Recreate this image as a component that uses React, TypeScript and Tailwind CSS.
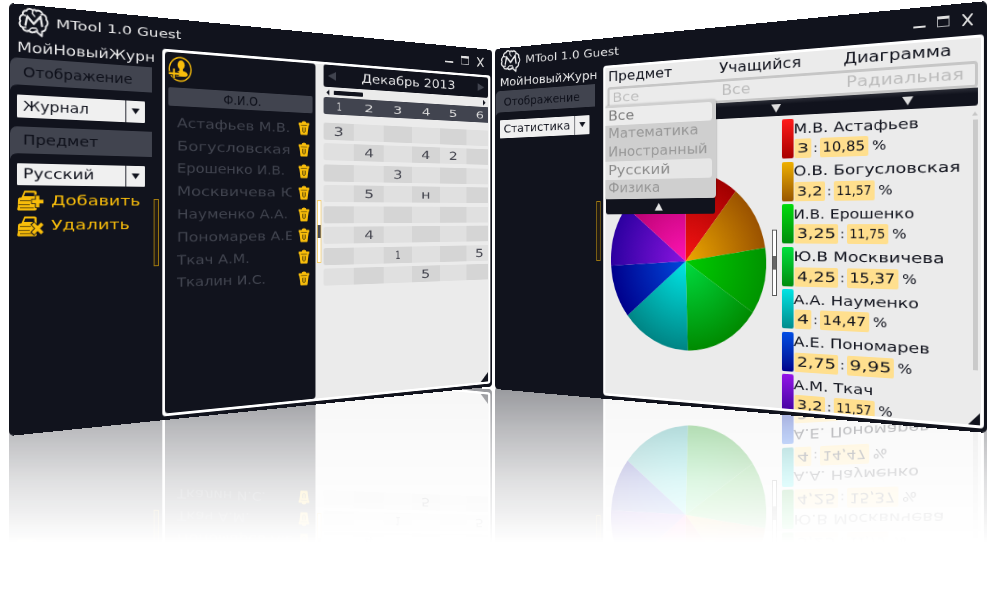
import React, { useLayoutEffect, useRef, useState } from "react";

type FitProps = { w: number; className?: string; children: string };

/** One line of text stretched horizontally to an exact width. */
function Fit({ w, className = "", children }: FitProps) {
  const ref = useRef<HTMLSpanElement>(null);
  const [k, setK] = useState(1);
  useLayoutEffect(() => {
    if (ref.current) setK(w / ref.current.offsetWidth);
  }, [w, children]);
  return (
    <div className={"shrink-0 whitespace-nowrap " + className} style={{ width: w }}>
      <span ref={ref} className="inline-block origin-left" style={{ transform: `scaleX(${k})` }}>
        {children}
      </span>
    </div>
  );
}

function Logo() {
  return (
    <svg viewBox="0 0 32 30" className="h-[30px] w-[32px] shrink-0" fill="none" stroke="#e9e9ea" strokeWidth="1.9" strokeLinecap="round" strokeLinejoin="round">
      <path d="M15 3.2C13 1 9.5 1.6 8.6 4 5.6 3.8 4.4 6.4 5 8.4 2 9.4 1 12.4 2.4 14.8 .8 17.2 1.8 20.4 4.6 21.2 5.4 24.2 8.6 25 11 24 13 26 16.6 25.8 18.4 24L24.4 28.4 24.6 23.6C27.4 23.4 29.2 21 28.4 18.6 31 16.8 31 13.2 29 11.6 29.6 8.6 27.6 6.4 25.2 6.4 24.2 3.2 20.8 2 18.4 3.4 17.4 2 16 2.2 15 3.2Z" />
      <path d="M7.6 18.5 9.4 9.4 16 16.8 23 8.8 24.6 18.2" strokeWidth="2.2" />
      <path d="M5 8.4 7.4 9M4.6 21.2 8 21M11 24 13 21.6M14 21 18.6 21 20 23.4M15 3.2 14.6 6.4 17 9M25.2 6.4 23.4 7" strokeWidth="1.4" />
    </svg>
  );
}

function Book({ kind }: { kind: "add" | "del" }) {
  return (
    <svg viewBox="0 0 28 21" className="h-[21px] w-[28px] shrink-0">
      <path d="M7.5 .5H18Q20 .5 20 2.5V8H4.2Z" fill="#f8bd0b" />
      <path d="M8.4 2.6H17.6V6H7Z" fill="#11131d" />
      <path d="M2.6 7.4H20V19Q20 20.4 18.6 20.4H1.4Q0 20.4 .3 18.8L.8 16.4 1 10Q1 7.4 2.6 7.4Z" fill="#f8bd0b" />
      <path d="M3 10.6H14M1.6 14.6H13M3 17.8H17" stroke="#5a450a" strokeWidth=".9" />
      {kind === "add" ? (
        <>
          <path d="M21 4.6V18M14.5 11.4H28" stroke="#11131d" strokeWidth="5.4" />
          <path d="M21 5.6V17.2M15.2 11.4H27" stroke="#f8bd0b" strokeWidth="3.6" />
        </>
      ) : (
        <>
          <path d="M15.4 7 26.6 18.2M26.6 7 15.4 18.2" stroke="#11131d" strokeWidth="5.2" />
          <path d="M16.2 7.8 25.8 17.4M25.8 7.8 16.2 17.4" stroke="#f8bd0b" strokeWidth="3.6" />
        </>
      )}
    </svg>
  );
}

function AddPerson() {
  return (
    <svg viewBox="0 0 28 28" className="h-[28px] w-[28px]">
      <circle cx="14" cy="14" r="12.8" fill="none" stroke="#f8bd0b" strokeWidth="1.6" />
      <ellipse cx="15" cy="9.2" rx="4.2" ry="5" fill="#f8bd0b" />
      <path d="M13 13H17V15.4Q22.8 16.4 22.8 19.4 22.8 21.8 18 21.8H8V18L13 15.4Z" fill="#f8bd0b" />
      <path d="M6.6 13.4V24.4M1 18.9H12.2" stroke="#11131d" strokeWidth="4.2" />
      <path d="M6.6 13.4V24M.6 18.8H12.4" stroke="#f8bd0b" strokeWidth="2.2" />
    </svg>
  );
}

function Trash() {
  return (
    <svg viewBox="0 0 15 17" className="h-[17px] w-[15px] shrink-0">
      <path d="M5 1.2Q7.5 0 10 1.2L10.2 2.4H14.5V5.2H13.8L12.4 15.4Q12.2 16.6 11 16.6H4Q2.8 16.6 2.6 15.4L1.2 5.2H.5V2.4H4.8Z" fill="#f8bd0b" />
      <path d="M3.4 5.4H11.6M5.6 7.8V12Q5.6 13.6 7.5 13.6 9.4 13.6 9.4 12V7.8M7.5 7.4V13.6" stroke="#6b5208" strokeWidth=".9" fill="none" />
    </svg>
  );
}

function Tri({ dir, className }: { dir: "up" | "down" | "left" | "right"; className: string }) {
  const d = { up: "M0 10H10L5 0Z", down: "M0 0H10L5 10Z", left: "M10 0V10L0 5Z", right: "M0 0V10L10 5Z" }[dir];
  return (
    <svg viewBox="0 0 10 10" preserveAspectRatio="none" className={"shrink-0 " + className}>
      <path d={d} fill="currentColor" />
    </svg>
  );
}

function Tab({ label, w }: { label: string; w: number }) {
  return (
    <div className="h-[33px]">
      <div className="flex h-[27px] w-[152px] items-center rounded-tl-[7px] bg-[#41444f] pl-[13px] text-[#0d0f19]">
        <Fit w={w}>{label}</Fit>
      </div>
      <svg viewBox="0 0 8 6" className="block h-[6px] w-[8px]">
        <path d="M0 0H8Q1 0 0 6Z" fill="#41444f" />
      </svg>
    </div>
  );
}

function Select({ label, w }: { label: string; w: number }) {
  return (
    <div className="ml-[7px] flex h-[22.5px] w-[137px] items-stretch rounded-[1px] bg-[#f0f0f0] text-[#11131d]">
      <div className="flex flex-1 items-center border-r border-[#11131d] pb-px pl-[6px]">
        <Fit w={w}>{label}</Fit>
      </div>
      <div className="flex w-[21px] items-center justify-center">
        <Tri dir="down" className="h-[6px] w-[9px]" />
      </div>
    </div>
  );
}

function Scroller({ light }: { light?: boolean }) {
  return light ? (
    <div className="flex h-[73px] w-[6px] items-center border border-[#555] bg-white">
      <div className="h-[15px] w-full bg-[#666]" />
    </div>
  ) : (
    <div className="h-[72px] w-[6px] border border-[#a87f0e] bg-[#221c14]" />
  );
}

type ChromeProps = { className: string; side: React.ReactNode; children: React.ReactNode };

function Chrome({ className, side, children }: ChromeProps) {
  return (
    <div className={"absolute left-0 top-0 flex origin-[0_0] flex-col overflow-hidden rounded-[5px] bg-[#11131d] font-['DejaVu_Sans',sans-serif] text-[14px] leading-none text-[#e9e9ea] " + className}>
      <div className="flex h-[33px] shrink-0 items-center pl-[9px] pr-[13px]">
        <Logo />
        <Fit w={140} className="ml-[7px] text-[13px]">MTool 1.0 Guest</Fit>
        <div className="ml-auto flex items-center gap-[12px]">
          <div className="mt-[7px] h-[2px] w-[13px] bg-[#e0e0e0]" />
          <div className="h-[11px] w-[13px] border border-t-[3px] border-[#a9aaae] border-t-[#e0e0e0]" />
          <svg viewBox="0 0 12 12" className="h-[12px] w-[13px]">
            <path d="M1 0 11 12M11 0 1 12" stroke="#e4e4e4" strokeWidth="1.9" />
          </svg>
        </div>
      </div>
      <div className="flex min-h-0 flex-1 pb-[4px] pr-[3px]">
        <div className="flex w-[164.5px] shrink-0">
          <div className="flex w-[155px] shrink-0 flex-col pl-px">
            <div className="flex h-[21px] items-center overflow-hidden pb-px pl-[7px]">
              <Fit w={149}>МойНовыйЖурн</Fit>
            </div>
            {side}
          </div>
          <div className="pt-[162px]">
            <Scroller />
          </div>
        </div>
        <div className="relative flex min-w-0 flex-1 overflow-hidden rounded-[4px] border-[3px] border-white bg-[#ebebeb] text-[#11131d]">
          {children}
        </div>
      </div>
    </div>
  );
}

const students: [string, number][] = [
  ["Астафьев М.В.", 141],
  ["Богусловская", 141],
  ["Ерошенко И.В.", 134],
  ["Москвичева Ю", 149],
  ["Науменко А.А.", 138],
  ["Пономарев А.Е", 146],
  ["Ткач А.М.", 89],
  ["Ткалин И.С.", 109],
];

const marks = ["3     ", " 4 42 ", "  3   ", " 5 н  ", "      ", " 4    ", "  1  5", "   5  "];

function Journal() {
  return (
    <Chrome
      className="h-[433px] w-[622px] [transform:matrix3d(1.004155,0.0987,0,0.0004617,0,1,0,0,0,0,1,0,9,3,0,1)]"
      side={
        <>
          <Tab label="Отображение" w={117} />
          <div className="mt-[4px]">
            <Select label="Журнал" w={69} />
          </div>
          <div className="mt-[9px]">
            <Tab label="Предмет" w={79} />
          </div>
          <div className="mt-[4px]">
            <Select label="Русский" w={75} />
          </div>
          <div className="mt-[2.5px] flex h-[26px] items-center pl-[7px] text-[#f8bd0b]">
            <Book kind="add" />
            <Fit w={97} className="ml-[7px] text-[13.5px]">Добавить</Fit>
          </div>
          <div className="flex h-[26px] items-center pl-[7px] text-[#f8bd0b]">
            <Book kind="del" />
            <Fit w={85} className="mb-[2px] ml-[7px] text-[13.5px]">Удалить</Fit>
          </div>
        </>
      }
    >
      <div className="flex w-[189px] shrink-0 flex-col rounded-[4px] bg-[#11131d] px-[4px] pt-[4px]">
        <AddPerson />
        <div className="mt-[6px] flex h-[20px] items-center justify-center rounded-[2px] bg-[#41444f] text-[#0d0f19]">
          <Fit w={48}>Ф.И.О.</Fit>
        </div>
        <div className="mt-[5.5px] flex flex-col text-[#41444f]">
          {students.map(([name, w]) => (
            <div key={name} className="flex h-[24.8px] items-center">
              <div className="ml-[10px] w-[143px] overflow-hidden py-[3px]">
                <Fit w={w} className="text-[14px]">{name}</Fit>
              </div>
              <div className="ml-[9px]">
                <Trash />
              </div>
            </div>
          ))}
        </div>
      </div>
      <div className="w-[9px] shrink-0 pl-[2.5px] pt-[159px]">
        <div className="flex h-[73px] w-[6px] items-center border border-[#f3c552] bg-white">
          <div className="h-[15px] w-full bg-[#4a4a50]" />
        </div>
      </div>
      <div className="flex w-[249.5px] shrink-0 flex-col pl-[2.5px]">
        <div className="flex h-[26px] items-center justify-between rounded-[3px] bg-[#11131d] px-[6px] text-[#e9e9ea]">
          <Tri dir="left" className="h-[10px] w-[11px] text-[#41444f]" />
          <Fit w={141} className="text-[14.5px]">Декабрь 2013</Fit>
          <Tri dir="right" className="h-[10px] w-[11px] text-[#41444f]" />
        </div>
        <div className="flex h-[12px] items-center px-[4px]">
          <Tri dir="left" className="h-[7px] w-[4px]" />
          <div className="ml-[6px] h-[5px] w-[41px] rounded-[1px] bg-[#11131d]" />
          <Tri dir="right" className="ml-auto h-[7px] w-[4px]" />
        </div>
        <div className="flex h-[20px] items-center overflow-hidden rounded-l-[3px] bg-[#41444f] text-[#dcdcdc]">
          {["1", "2", "3", "4", "5", "6"].map((d) => (
            <div key={d} className="flex w-[42.4px] shrink-0 justify-center">
              <Fit w={d === "1" ? 7 : 13} className="text-[13px]">{d}</Fit>
            </div>
          ))}
        </div>
        <div className="mt-[9.5px] flex flex-col gap-[4.5px]">
          {marks.map((row, r) => (
            <div key={r} className="flex h-[20px] overflow-hidden rounded-l-[3px]">
              {row.split("").map((m, c) => (
                <div key={c} className={"flex w-[42.4px] shrink-0 items-center justify-center text-[#41424c] " + ((r + c) % 2 ? "bg-[#e0e0e0]" : "bg-[#d5d5d5]")}>
                  {m !== " " && <Fit w={m === "1" ? 8 : 14} className="text-[14px]">{m}</Fit>}
                </div>
              ))}
            </div>
          ))}
        </div>
      </div>
      <svg viewBox="0 0 12 12" className="absolute bottom-0 right-px h-[12px] w-[12px]">
        <path d="M12 0V12H0Z" fill="#11131d" />
      </svg>
    </Chrome>
  );
}

const slices: [number, string, string][] = [
  [10.85, "#f81414", "#a00000"],
  [11.57, "#eda800", "#9a5200"],
  [11.75, "#00cc00", "#009400"],
  [15.37, "#00dc40", "#008a00"],
  [14.47, "#00e6e6", "#008484"],
  [9.95, "#0048dc", "#00008c"],
  [11.57, "#8a14e0", "#2c00a0"],
  [14.47, "#ff14b4", "#b00068"],
];

function Pie() {
  let acc = 0;
  const pt = (p: number) => {
    const a = (p / 100) * Math.PI * 2;
    return `${(102.5 + 102.5 * Math.sin(a)).toFixed(2)} ${(102.5 - 102.5 * Math.cos(a)).toFixed(2)}`;
  };
  return (
    <svg viewBox="0 0 205 205" className="h-[205px] w-[205px] shrink-0">
      <defs>
        {slices.map(([, a, b], i) => (
          <radialGradient key={i} id={`slice${i}`} gradientUnits="userSpaceOnUse" cx="102.5" cy="102.5" r="102.5">
            <stop offset="0" stopColor={a} />
            <stop offset="1" stopColor={b} />
          </radialGradient>
        ))}
      </defs>
      {slices.map(([p], i) => {
        const from = acc;
        acc += p;
        return <path key={i} d={`M102.5 102.5L${pt(from)}A102.5 102.5 0 0 1 ${pt(acc)}Z`} fill={`url(#slice${i})`} />;
      })}
    </svg>
  );
}

type Legend = { name: string; w: number; mark: string; mw: number; pct: string; pw: number; bar: string };

const legend: Legend[] = [
  { name: "М.В. Астафьев", w: 141, mark: "3", mw: 20, pct: "10,85", pw: 55, bar: "from-[#ff1a1a] to-[#a80000]" },
  { name: "О.В. Богусловская", w: 184, mark: "3,2", mw: 36, pct: "11,57", pw: 46, bar: "from-[#eeb000] to-[#985600]" },
  { name: "И.В. Ерошенко", w: 136, mark: "3,25", mw: 51, pct: "11,75", pw: 46, bar: "from-[#00dc0c] to-[#008c0c]" },
  { name: "Ю.В Москвичева", w: 168, mark: "4,25", mw: 51, pct: "15,37", pw: 57, bar: "from-[#00e03c] to-[#008c0c]" },
  { name: "А.А. Науменко", w: 141, mark: "4", mw: 20, pct: "14,47", pw: 56, bar: "from-[#00e4e4] to-[#008c8c]" },
  { name: "А.Е. Пономарев", w: 153, mark: "2,75", mw: 51, pct: "9,95", pw: 52, bar: "from-[#004ce4] to-[#00008c]" },
  { name: "А.М. Ткач", w: 91, mark: "3,2", mw: 36, pct: "11,57", pw: 46, bar: "from-[#9414e8] to-[#40009c]" },
];

const subjects: [string, number, string][] = [
  ["Все", 37, "bg-[#ececec] text-[#7c7c7c]"],
  ["Математика", 123, "text-[#979797]"],
  ["Иностранный", 135, "text-[#979797]"],
  ["Русский", 86, "bg-[#e6e6e6] text-[#8c8c8c]"],
  ["Физика", 73, "text-[#979797]"],
];

function Stats() {
  return (
    <Chrome
      className="h-[432px] w-[625px] [transform:matrix3d(0.5728,-0.098,0,-0.0004329,0,1,0,0,0,0,1,0,628.95,62.26,0,1.2706)]"
      side={
        <>
          <Tab label="Отображение" w={117} />
          <div className="mt-[4px]">
            <Select label="Статистика" w={103} />
          </div>
        </>
      }
    >
      <div className="flex min-w-0 flex-1 flex-col">
        <div className="flex h-[23px] shrink-0 items-center pb-px pl-[4px] text-[15px]">
          <Fit w={89}>Предмет</Fit>
          <Fit w={101} className="ml-[61px]">Учащийся</Fit>
          <Fit w={117} className="ml-[49px]">Диаграмма</Fit>
        </div>
        <div className="ml-[3px] mr-[3px] flex h-[27px] shrink-0 items-center rounded-[4px] border-[3px] border-[#c6c6c6] bg-[#ebebeb] text-[15px] text-[#bdbdbd]">
          <Fit w={38} className="ml-[4px]">Все</Fit>
          <Fit w={37} className="ml-[109px]">Все</Fit>
          <Fit w={127} className="ml-[113px]">Радиальная</Fit>
        </div>
        <div className="ml-[3px] mr-[3px] flex h-[18px] shrink-0 items-center rounded-b-[3px] bg-[#11131d] bg-linear-to-b from-[#2b2d36] to-[#11131d] to-30% text-[#dedede]">
          <Tri dir="down" className="ml-[216px] h-[9px] w-[12px]" />
          <Tri dir="down" className="ml-[138px] h-[9px] w-[12px]" />
        </div>
        <div className="flex min-h-0 flex-1">
          <div className="shrink-0 pl-[8px] pt-[59px]">
            <Pie />
          </div>
          <div className="ml-[7px] shrink-0 pt-[125px]">
            <Scroller light />
          </div>
          <div className="ml-[6px] flex h-[321px] w-[202px] shrink-0 flex-col gap-[3.5px] overflow-hidden pt-[4px]">
            {legend.map((l) => (
              <div key={l.name} className="flex h-[43px] shrink-0">
                <div className={"w-[14px] shrink-0 rounded-[2px] bg-linear-to-b " + l.bar} />
                <div className="flex flex-col">
                  <Fit w={l.w} className="flex h-[22px] items-center text-[14.5px]">{l.name}</Fit>
                  <div className="flex h-[21px] items-center pl-px text-[14.5px]">
                    <div className="flex h-full items-center rounded-[2px] bg-[#ffdf8e] px-[3px]">
                      <Fit w={l.mw - 6}>{l.mark}</Fit>
                    </div>
                    <div className="flex w-[10.5px] justify-center">:</div>
                    <div className="flex h-full items-center rounded-[2px] bg-[#ffdf8e] px-[3px]">
                      <Fit w={l.pw - 6}>{l.pct}</Fit>
                    </div>
                    <Fit w={16} className="ml-[4px] text-[14.5px]">%</Fit>
                  </div>
                </div>
              </div>
            ))}
          </div>
          <div className="flex shrink-0 flex-col items-center pl-[8.5px] pt-[6px] text-[#c6c6c6]">
            <Tri dir="up" className="h-[4px] w-[6px]" />
            <div className="mt-[4px] h-[252px] w-[5px] bg-[#cacaca]" />
          </div>
        </div>
      </div>
      <div className="absolute left-0 top-[45px] w-[150.5px]">
        <div className="flex h-[112px] flex-col rounded-[4px] bg-[#cfcfcf] pt-[2.5px] shadow-[0_1px_3px_rgba(0,0,0,0.45)]">
          {subjects.map(([name, w, tone]) => (
            <div key={name} className={"mr-[5px] flex h-[21.6px] shrink-0 items-center rounded-r-[4px] pl-[4px] text-[15px] " + tone}>
              <Fit w={w}>{name}</Fit>
            </div>
          ))}
        </div>
        <div className="ml-px flex h-[18px] w-[148.5px] items-center justify-center rounded-b-[3px] bg-[#11131d] text-[#e4e4e4]">
          <Tri dir="up" className="h-[9px] w-[11px]" />
        </div>
      </div>
      <svg viewBox="0 0 12 12" className="absolute bottom-0 right-px h-[12px] w-[12px]">
        <path d="M12 0V12H0Z" fill="#11131d" />
      </svg>
    </Chrome>
  );
}

export default function App() {
  return (
    <div className="relative h-[605px] w-[1000px] overflow-hidden bg-white">
      <div
        aria-hidden="true"
        className="absolute inset-0 [mask-image:linear-gradient(to_bottom,rgba(0,0,0,0.43)_388px,rgba(0,0,0,0.29)_428px,rgba(0,0,0,0.13)_482px,transparent_543px)]"
      >
        <div className="absolute left-0 top-0 h-[776px] w-[1000px] -scale-y-100">
          <Journal />
          <Stats />
        </div>
      </div>
      <Journal />
      <Stats />
    </div>
  );
}
